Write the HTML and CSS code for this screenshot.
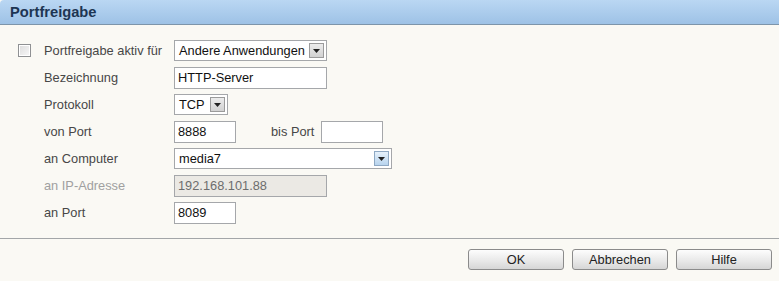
FILE: index.html
```html
<!DOCTYPE html>
<html>
<head>
    <title>Portfreigabe</title>
    <meta http-equiv="content-type" content="text/html; charset=UTF-8"/>
    <link rel="stylesheet" href="styles.css">
</head>
<body>
    <div class="dialog-head">Portfreigabe</div>
    <div class="dialog-body">
        <div class="form-grid">
            <span class="checkbox"></span>
            <span class="label">Portfreigabe aktiv für</span>
            <div class="combo combo-wide">
                <span class="combo-text">Andere Anwendungen</span>
                <span class="combo-arrow"><svg width="7" height="4" viewBox="0 0 7 4"><path d="M0 0h7L3.5 4z" fill="#222"/></svg></span>
            </div>

            <span></span>
            <span class="label">Bezeichnung</span>
            <div><input class="field field-wide" type="text" value="HTTP-Server"></div>

            <span></span>
            <span class="label">Protokoll</span>
            <div class="combo combo-small">
                <span class="combo-text">TCP</span>
                <span class="combo-arrow"><svg width="7" height="4" viewBox="0 0 7 4"><path d="M0 0h7L3.5 4z" fill="#222"/></svg></span>
            </div>

            <span></span>
            <span class="label">von Port</span>
            <div class="port-range">
                <input class="field field-port" type="text" value="8888">
                <span class="label label-inline">bis Port</span>
                <input class="field field-port" type="text" value="">
            </div>

            <span></span>
            <span class="label">an Computer</span>
            <div class="combo combo-long">
                <span class="combo-text">media7</span>
                <span class="combo-arrow combo-arrow-hot"><svg width="7" height="4" viewBox="0 0 7 4"><path d="M0 0h7L3.5 4z" fill="#222"/></svg></span>
            </div>

            <span></span>
            <span class="label label-disabled">an IP-Adresse</span>
            <div><input class="field field-wide" type="text" value="192.168.101.88" disabled></div>

            <span></span>
            <span class="label">an Port</span>
            <div><input class="field field-port" type="text" value="8089"></div>
        </div>
    </div>
    <div class="dialog-foot">
        <button>OK</button>
        <button>Abbrechen</button>
        <button>Hilfe</button>
    </div>
</body>
</html>
```

FILE: styles.css
```css
html {
    height: 100%;
}

body {
    margin: 0;
    height: 100%;
    background-color: #faf9f4;
    color: #3c3c3c;
    font-family: "Liberation Sans", Arial, sans-serif;
    font-size: 12.8px;
    overflow: hidden;
}

.dialog-head {
    height: 24px;
    line-height: 25px;
    padding-left: 10px;
    background: linear-gradient(#bad7f3, #9ec2e6);
    border-bottom: 1px solid #7d95aa;
    border-top-left-radius: 4px;
    color: #1d3553;
    font-size: 14.7px;
    font-weight: bold;
}

.dialog-body {
    padding: 12px 0 0 18px;
    height: 201px;
    border-bottom: 1px solid #a3a6a8;
}

.form-grid {
    display: grid;
    grid-template-columns: 26px 130px auto;
    grid-auto-rows: 27px;
    align-items: center;
}

.checkbox {
    width: 11px;
    height: 11px;
    border: 1px solid #8f9193;
    background: linear-gradient(135deg, #dcdcdc, #f8f8f8);
    box-shadow: inset 0 0 0 1px #fff;
}

.label {
    color: #474747;
}

.label-disabled {
    color: #a0a0a0;
}

.label-inline {
    margin: 0 0 0 35px;
    width: 50px;
}

.field {
    box-sizing: border-box;
    height: 22px;
    margin: 0;
    padding: 0 3px;
    border: 1px solid #a5a7aa;
    background: #fff;
    color: #111;
    font: inherit;
    outline: none;
}

.field:disabled {
    background: #ebe9e4;
    color: #6d6d6d;
}

.field-wide {
    width: 153px;
}

.field-port {
    width: 62px;
}

.port-range {
    display: flex;
    align-items: center;
}

.combo {
    box-sizing: border-box;
    display: flex;
    align-items: center;
    height: 21px;
    border: 1px solid #a5a7aa;
    background: #fff;
    color: #111;
}

.combo-wide {
    width: 153px;
}

.combo-small {
    width: 54px;
}

.combo-long {
    width: 218px;
}

.combo-text {
    flex: 1;
    padding-left: 4px;
    white-space: nowrap;
}

.combo-arrow {
    box-sizing: border-box;
    display: flex;
    align-items: center;
    justify-content: center;
    width: 15px;
    height: 15px;
    margin-right: 2px;
    border: 1px solid #9b9b9b;
    background: linear-gradient(#ececec, #d2d2d2);
}

.combo-arrow-hot {
    border-color: #8fa9c4;
    background: linear-gradient(#e6f1fb, #b8d4ee);
}

.dialog-foot {
    display: flex;
    justify-content: flex-end;
    gap: 8px;
    padding: 10px 7px 0 0;
}

.dialog-foot button {
    width: 96px;
    height: 21px;
    padding: 0;
    border: 1px solid #8b8b8b;
    border-radius: 3px;
    background: linear-gradient(#fdfdfd, #e9e9e9 55%, #d6d6d6);
    color: #222;
    font: inherit;
}
```
